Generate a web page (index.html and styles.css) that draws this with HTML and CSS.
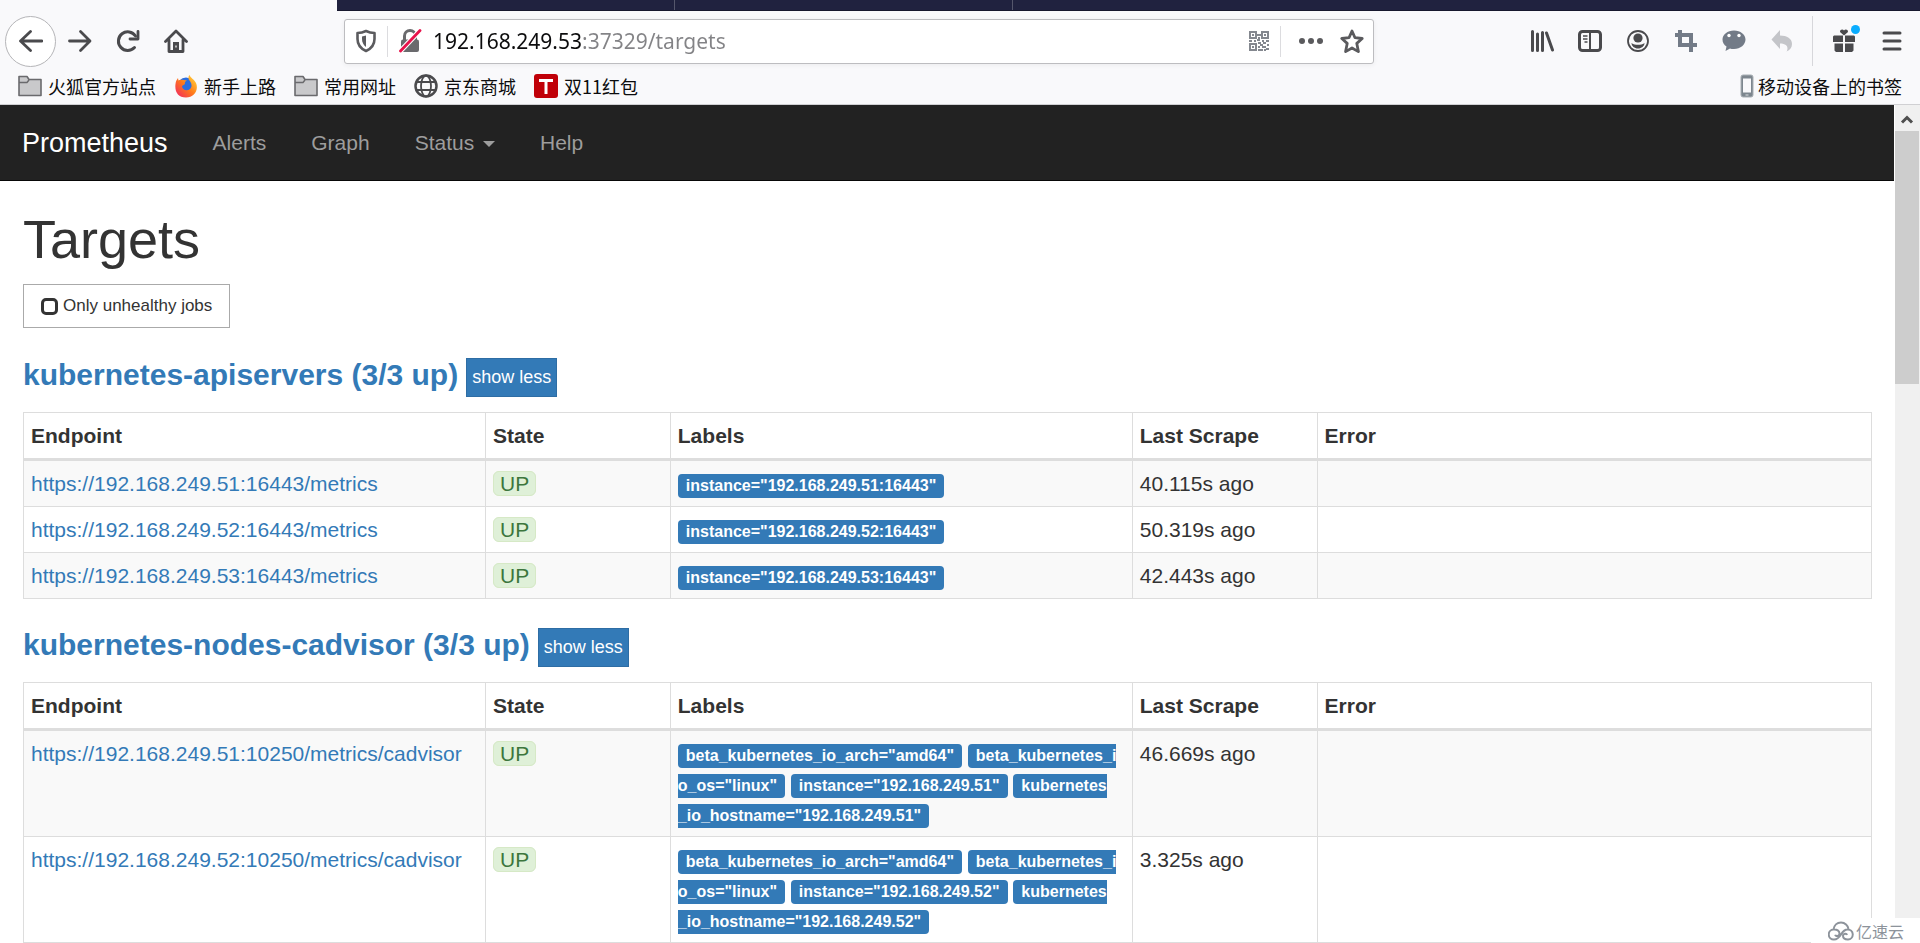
FILE: index.html
```html
<!DOCTYPE html>
<html lang="zh-CN">
<head>
<meta charset="utf-8">
<title>Prometheus Targets</title>
<link rel="stylesheet" href="styles.css">
</head>
<body>
<header class="browser">
  <div class="tabstrip"><span class="tab"></span><span class="tab"></span><span class="tab rest"></span></div>
  <div class="toolbar">
    <div class="nav-buttons">
      <button class="icon-btn back" aria-label="Back"><svg viewBox="0 0 24 24"><path d="M23 12H2M11.500 2.500L1.500 12l10 9.500" fill="none" stroke="#4a4a4d" stroke-width="2.800" stroke-linecap="round" stroke-linejoin="round"/></svg></button>
      <button class="icon-btn" aria-label="Forward"><svg viewBox="0 0 24 24"><path d="M1.500 12h20M12.500 2.500L22 12l-9.500 9.500" fill="none" stroke="#4a4a4d" stroke-width="2.800" stroke-linecap="round" stroke-linejoin="round"/></svg></button>
      <button class="icon-btn" aria-label="Reload"><svg viewBox="0 0 24 24"><path d="M18.500 18.500A9.300 9.300 0 1 1 19.500 7" fill="none" stroke="#4a4a4d" stroke-width="3" stroke-linecap="round"/><path d="M22 2.500V10h-8" fill="none" stroke="#4a4a4d" stroke-width="2.800" stroke-linecap="round" stroke-linejoin="round"/></svg></button>
      <button class="icon-btn" aria-label="Home"><svg viewBox="0 0 24 24"><path d="M1.500 12.500L12 2l10.500 10.500M5 11v11.500h14V11" fill="none" stroke="#4a4a4d" stroke-width="2.800" stroke-linecap="round" stroke-linejoin="round"/><path d="M9 22v-9h6v9z" fill="#4a4a4d"/><path d="M12 16.500v2" stroke="#fff" stroke-width="1.200"/></svg></button>
    </div>
    <div class="urlbar">
      <svg class="shield" viewBox="0 0 22 24"><path d="M11 2c3 1.500 6 2 8.500 2v6c0 6-4 10-8.500 12C6.500 20 2.500 16 2.500 10V4C5 4 8 3.500 11 2z" fill="none" stroke="#5b5b5e" stroke-width="2.600" stroke-linejoin="round"/><path d="M11 6.500v11.500c-2.500-2-4-4.500-4-8V7.500z" fill="#5b5b5e"/></svg>
      <span class="url-sep"></span>
      <svg class="lock" viewBox="0 0 24 24"><path d="M6.500 11V7a5.500 5.500 0 0 1 11 0v4" fill="none" stroke="#6a6a6d" stroke-width="3"/><rect x="3" y="10.500" width="18" height="12.500" rx="2" fill="#6a6a6d"/><path d="M2 22.500L22 1.500" stroke="#fff" stroke-width="5"/><path d="M2.500 22L22 1.500" stroke="#e8134b" stroke-width="2.800" stroke-linecap="round"/></svg>
      <input class="url" type="text" value="192.168.249.53:37329/targets" aria-label="Address">
      <svg class="qr" viewBox="0 0 22 22" fill="none" stroke="#84888f" stroke-width="2"><path d="M2 2h6v6H2zM14 2h6v6h-6zM2 14h6v6H2z"/><path d="M4 5h2M16 5h2M4 17h2M9 5h4M9 10h3M11 7v3M1 11h3M6 11h2M14 11h2M18 11h3M10 13h3M15 13h3M19 15h2M12 15h3M10 17h2M14 17h4M18 19h3M12 20h3M11 19v2M16 20h2"/></svg>
      <span class="url-sep tail"></span>
      <svg class="dots" viewBox="0 0 26 24" fill="#5a5a5d"><circle cx="4" cy="12" r="3"/><circle cx="13" cy="12" r="3"/><circle cx="22" cy="12" r="3"/></svg>
      <svg class="star" viewBox="0 0 24 24"><path d="M12 2l3 6.700 7.200.8-5.400 4.900 1.600 8.200L12 19l-6.400 3.600 1.600-8.200L1.800 9.500 9 8.700z" fill="none" stroke="#5a5a5d" stroke-width="2.800" stroke-linejoin="round"/></svg>
    </div>
    <div class="tools">
      <button class="icon-btn" aria-label="Library"><svg viewBox="0 0 24 24" stroke="#4a4a4d" stroke-width="3" stroke-linecap="round"><path d="M2.500 2.500v19M7.500 5v16.500M12.500 3.500v18M16.500 4l6 17"/></svg></button>
      <button class="icon-btn" aria-label="Sidebar"><svg viewBox="0 0 24 24" fill="none" stroke="#4a4a4d"><rect x="1.500" y="2.500" width="21" height="19" rx="3" stroke-width="3"/><path d="M12 3v18" stroke-width="2"/><path d="M5 7h4.500M5 10h4.500M6.500 13h3" stroke-width="1.500"/></svg></button>
      <button class="icon-btn" aria-label="Account"><svg viewBox="0 0 24 24"><circle cx="12" cy="12" r="10" fill="none" stroke="#4a4a4d" stroke-width="1.800"/><circle cx="12" cy="9" r="4.600" fill="#4a4a4d"/><path d="M5.500 14c2 1.500 4 1.800 6.500 1.800s4.500-.3 6.500-1.800c0 3-3 5.500-6.500 5.500S5.500 17 5.500 14z" fill="#4a4a4d"/></svg></button>
      <button class="icon-btn" aria-label="Crop"><svg viewBox="0 0 24 24" fill="none" stroke="#737b87" stroke-width="4"><path d="M6 1v15h17M1 6h16v17"/></svg></button>
      <button class="icon-btn" aria-label="Chat"><svg viewBox="0 0 24 24"><path d="M12 1.500c6.500 0 11.500 4 11.500 9s-5 9.500-11.500 9.500c-2 0-3-.3-4-.6L3.500 22l1-4.500C2 16 .5 13.500.5 10.500c0-5 5-9 11.500-9z" fill="#737b87"/><circle cx="7" cy="6.500" r="1.700" fill="#fff"/><circle cx="17" cy="6.500" r="1.700" fill="#fff"/></svg></button>
      <button class="icon-btn" aria-label="Undo"><svg viewBox="0 0 24 24"><path d="M10 1v5.500c7 0 12 3 12 8.500 0 3.500-2 6-5.500 7.500 2-3 1.500-8-6.500-8V20L1.500 10.500z" fill="#c4c5c9"/></svg></button>
      <span class="tool-sep"></span>
      <button class="icon-btn" aria-label="What's new"><svg viewBox="0 0 24 24" fill="#4a4a4d"><path d="M2 6.500h9V13H1V7.500zM13 6.500h9l1 1V13H13zM2.500 14.500H11V23H4l-1.500-1.500zM13 14.500h8.500v7L20 23h-7zM12 6.500L8 3C8 0 11 0 12 1.500 13 0 16 0 16 3z"/></svg><span class="badge"></span></button>
      <button class="icon-btn" aria-label="Menu"><svg viewBox="0 0 24 24" stroke="#4a4a4d" stroke-width="3" stroke-linecap="round"><path d="M4 4h16M4 12h16M4 20h16"/></svg></button>
    </div>
  </div>
  <nav class="bookmarks" aria-label="Bookmarks">
    <a href="#"><svg viewBox="0 0 24 24"><path d="M1 21.500V2.500h8l2 3h12v16z" fill="#c9c9cb" stroke="#6a6a6d" stroke-width="1.600" stroke-linejoin="round"/><path d="M1 8.500h8l2-2.500" fill="none" stroke="#6a6a6d" stroke-width="1.500"/></svg>火狐官方站点</a>
    <a href="#"><svg viewBox="0 0 24 24"><defs><linearGradient id="fx" x1="1" y1="0" x2="0" y2="1"><stop offset="0" stop-color="#ffe141"/><stop offset=".5" stop-color="#ff7a1a"/><stop offset="1" stop-color="#f0206a"/></linearGradient></defs><circle cx="12" cy="12.500" r="9" fill="#2b6ee0"/><path d="M15.500 1c1 3 4.500 4 6.500 8 3 7-2 14.500-10 14.500S.5 17.500 1.500 10c.3-2.500 1-4 2.500-6l.5 2.500C6 5.500 8 5.500 9.500 6l3.500.5c-2 1-2.500 2.200-2 3.500l-3 2c0 4 5 5.500 8 3 3-3 1-7-1-9-1-2-.5-4 .5-5z" fill="url(#fx)"/></svg>新手上路</a>
    <a href="#"><svg viewBox="0 0 24 24"><path d="M1 21.500V2.500h8l2 3h12v16z" fill="#c9c9cb" stroke="#6a6a6d" stroke-width="1.600" stroke-linejoin="round"/><path d="M1 8.500h8l2-2.500" fill="none" stroke="#6a6a6d" stroke-width="1.500"/></svg>常用网址</a>
    <a href="#"><svg viewBox="0 0 24 24" fill="none" stroke="#4a4a4d"><circle cx="12" cy="12" r="10.500" stroke-width="2.500"/><ellipse cx="12" cy="12" rx="5" ry="10.500" stroke-width="1.800"/><path d="M2.500 8h19M2.500 16h19" stroke-width="1.800"/></svg>京东商城</a>
    <a href="#"><svg viewBox="0 0 24 24"><rect width="24" height="24" rx="3" fill="#c00008"/><path d="M5 6.500h14M12 6.500V20" stroke="#fff" stroke-width="3" fill="none"/></svg>双11红包</a>
    <a href="#" class="mobile"><svg viewBox="0 0 14 24"><rect x="1" y="1" width="12" height="22" rx="2" fill="#7d868e" stroke="#a9afb4"/><path d="M3 4.500h8v14H3z" fill="#f8f8fa"/><path d="M5.500 21h3" stroke="#dfe2e4"/></svg>移动设备上的书签</a>
  </nav>
</header>
<div class="viewport">
  <div class="page">
    <nav class="navbar">
      <a class="brand" href="#">Prometheus</a>
      <a href="#">Alerts</a>
      <a href="#">Graph</a>
      <a href="#">Status <span class="caret"></span></a>
      <a href="#">Help</a>
    </nav>
    <main class="content">
      <h1>Targets</h1>
      <label class="unhealthy"><input type="checkbox">Only unhealthy jobs</label>
      <section class="job">
        <h2><a href="#">kubernetes-apiservers (3/3 up)</a><button class="toggle">show less</button></h2>
        <table class="targets">
          <thead><tr><th class="c-endpoint">Endpoint</th><th class="c-state">State</th><th class="c-labels">Labels</th><th class="c-scrape">Last Scrape</th><th class="c-error">Error</th></tr></thead>
          <tbody>
            <tr><td><a href="#">https://192.168.249.51:16443/metrics</a></td><td><span class="up">UP</span></td><td><span class="label">instance="192.168.249.51:16443"</span></td><td>40.115s ago</td><td></td></tr>
            <tr><td><a href="#">https://192.168.249.52:16443/metrics</a></td><td><span class="up">UP</span></td><td><span class="label">instance="192.168.249.52:16443"</span></td><td>50.319s ago</td><td></td></tr>
            <tr><td><a href="#">https://192.168.249.53:16443/metrics</a></td><td><span class="up">UP</span></td><td><span class="label">instance="192.168.249.53:16443"</span></td><td>42.443s ago</td><td></td></tr>
          </tbody>
        </table>
      </section>
      <section class="job">
        <h2><a href="#">kubernetes-nodes-cadvisor (3/3 up)</a><button class="toggle">show less</button></h2>
        <table class="targets">
          <thead><tr><th class="c-endpoint">Endpoint</th><th class="c-state">State</th><th class="c-labels">Labels</th><th class="c-scrape">Last Scrape</th><th class="c-error">Error</th></tr></thead>
          <tbody>
            <tr><td><a href="#">https://192.168.249.51:10250/metrics/cadvisor</a></td><td><span class="up">UP</span></td><td><span class="label">beta_kubernetes_io_arch="amd64"</span> <span class="label">beta_kubernetes_i<wbr>o_os="linux"</span> <span class="label">instance="192.168.249.51"</span> <span class="label">kubernetes<wbr>_io_hostname="192.168.249.51"</span></td><td>46.669s ago</td><td></td></tr>
            <tr><td><a href="#">https://192.168.249.52:10250/metrics/cadvisor</a></td><td><span class="up">UP</span></td><td><span class="label">beta_kubernetes_io_arch="amd64"</span> <span class="label">beta_kubernetes_i<wbr>o_os="linux"</span> <span class="label">instance="192.168.249.52"</span> <span class="label">kubernetes<wbr>_io_hostname="192.168.249.52"</span></td><td>3.325s ago</td><td></td></tr>
          </tbody>
        </table>
      </section>
    </main>
  </div>
  <div class="scrollbar">
    <svg viewBox="0 0 24 26"><path d="M7 17.500l5-5 5 5" fill="none" stroke="#4f4f4f" stroke-width="3"/></svg>
    <div class="thumb"></div>
  </div>
</div>
<div class="watermark"><svg viewBox="0 0 26 20" fill="none" stroke="#8d939b" stroke-width="2"><path d="M5.500 8.500C6 4.500 9 1.500 13 1.500s7 3 7.500 6.500M5.500 8.500a5 5 0 0 0 .5 10c4 0 5.500-2.500 7-5s3-5 6.500-5a5 5 0 0 1 .5 10c-3 0-5-1.500-5-3.700 0-2.300 3.500-3 4-.8M5.500 8.500c3.500-.5 6 1.500 6 4 0 2.800-3.800 3.500-4.300 1.200"/></svg>亿速云</div>
</body>
</html>
```
FILE: styles.css
```css
* { box-sizing: border-box; }
body {
  margin: 0;
  height: 100vh;
  display: flex;
  flex-direction: column;
  overflow: hidden;
  background: #fff;
  color: #333;
  font: 21px/30px "Liberation Sans", Arial, "Noto Sans CJK SC", sans-serif;
}
a { color: #337ab7; text-decoration: none; }
button { font-family: inherit; border: 0; background: none; padding: 0; margin: 0; }
svg { display: block; flex: none; }

/* browser chrome */
.browser { flex: none; background: #f9f9fb; border-bottom: 1px solid #d0d0d3; }
.tabstrip { display: flex; height: 11px; margin-left: 337px; background: #20223f; border-bottom: 1px solid #17182e; }
.tab { width: 338px; border-right: 1px solid #55576c; }
.tab.rest { flex: 1; border: 0; }
.toolbar { display: flex; align-items: center; height: 60px; padding: 0 4px 0 5px; }
.nav-buttons { display: flex; align-items: center; width: 339px; }
.icon-btn { position: relative; width: 48px; height: 48px; display: flex; align-items: center; justify-content: center; }
.icon-btn svg { width: 24px; height: 24px; }
.back { width: 51px; height: 51px; border: 1px solid #b5b5b8; border-radius: 50%; background: #fff; }
.urlbar {
  flex: 1;
  display: flex;
  align-items: center;
  height: 45px;
  margin-right: 144px;
  padding: 0 9px 0 10px;
  background: #fff;
  border: 1px solid #bdbdc0;
  border-radius: 3px;
  box-shadow: 0 1px 5px rgba(0, 0, 0, .06);
}
.url-sep { width: 1px; height: 31px; margin: 0 10px; background: #dcdcdf; }
.url-sep.tail { margin: 0 17px 0 10px; }
.shield { width: 22px; height: 24px; }
.lock { width: 24px; height: 24px; }
.url {
  flex: 1;
  min-width: 0;
  height: 40px;
  margin-left: 11px;
  padding: 0;
  border: 0;
  outline: 0;
  font: 21px/30px "Noto Sans", "Open Sans", sans-serif;
  color: transparent;
  background: linear-gradient(90deg, #0c0c0d 149px, #838386 149px);
  -webkit-background-clip: text;
  background-clip: text;
}
.qr { width: 22px; height: 22px; }
.dots { width: 26px; height: 24px; margin-right: 16px; }
.star { width: 24px; height: 24px; }
.tools { display: flex; align-items: center; }
.tool-sep { width: 1px; height: 50px; margin: 0 7px 0 6px; background: #d7d7db; }
.badge { position: absolute; right: 8px; top: 8px; width: 9px; height: 9px; border-radius: 50%; background: #0aadff; }
.bookmarks { display: flex; align-items: center; height: 33px; padding: 0 18px 4px; gap: 18px; }
.bookmarks a { display: flex; align-items: center; gap: 6px; color: #0c0c0d; font: 18px/24px "Noto Sans CJK SC", sans-serif; }
.bookmarks svg { width: 24px; height: 24px; }
.bookmarks .mobile { margin-left: auto; gap: 4px; }
.bookmarks .mobile svg { width: 14px; }

/* page */
.viewport { flex: 1; min-height: 0; display: flex; }
.page { flex: 1; min-width: 0; overflow: hidden; }
.navbar { display: flex; align-items: center; gap: 45px; height: 76px; padding: 0 22px; background: #222; border-bottom: 1px solid #080808; }
.navbar a { color: #9d9d9d; }
.navbar .brand { color: #fff; font-size: 27px; }
.caret { display: inline-block; margin-left: 3px; border: 6px solid transparent; border-top-color: currentColor; border-bottom: 0; vertical-align: middle; }
.content { padding: 0 22px 0 23px; }
h1 { margin: 29px 0 16px; font-size: 54px; line-height: 58px; font-weight: 400; }
.unhealthy { display: inline-flex; align-items: center; gap: 5px; height: 44px; padding: 0 17px; border: 1px solid #aaa; font-size: 17px; line-height: 24px; }
.unhealthy input { appearance: none; width: 17px; height: 17px; margin: 0; border: 3px solid #333; border-radius: 5px; }
.job { margin-top: 30px; }
.job h2 { display: flex; align-items: flex-start; gap: 8px; margin: 0 0 15px; font-size: 30px; line-height: 34px; }
.toggle { height: 39px; padding: 0 5px; background: #337ab7; border: 1px solid #2e6da4; color: #fff; font-size: 18px; line-height: 27px; }
.job + .job { margin-top: 29px; }
.targets { width: 100%; table-layout: fixed; border-collapse: collapse; border: 1px solid #ddd; }
.targets th, .targets td { padding: 8px 7px 7px; border: 1px solid #ddd; text-align: left; vertical-align: top; }
.targets th { border-bottom-width: 3px; }
.targets tbody tr:nth-child(odd) { background: #f9f9f9; }
.c-endpoint, .c-labels { width: 25%; }
.c-state, .c-scrape { width: 10%; }
.c-error { width: 30%; }
.up { padding: 0 6px; border: 1px solid #d6e9c6; border-radius: 6px; background: #dff0d8; color: #3c763d; }
.label { padding: 3px 8px 4px; border-radius: 4px; background: #337ab7; color: #fff; font-size: 16px; line-height: 16px; font-weight: 700; white-space: nowrap; }

.scrollbar { width: 26px; border-left: 1px solid #fff; background: #f0f0f0; }
.scrollbar svg { width: 24px; height: 26px; }
.thumb { width: 24px; height: 30.2%; background: #cdcdcd; }
.watermark { position: absolute; right: 0; bottom: 0; display: flex; align-items: center; gap: 2px; height: 25px; padding: 0 16px 0 17px; background: #fff; color: #8d939b; font: 16px/24px "Noto Sans CJK SC", sans-serif; }
.watermark svg { width: 26px; height: 20px; }
```
